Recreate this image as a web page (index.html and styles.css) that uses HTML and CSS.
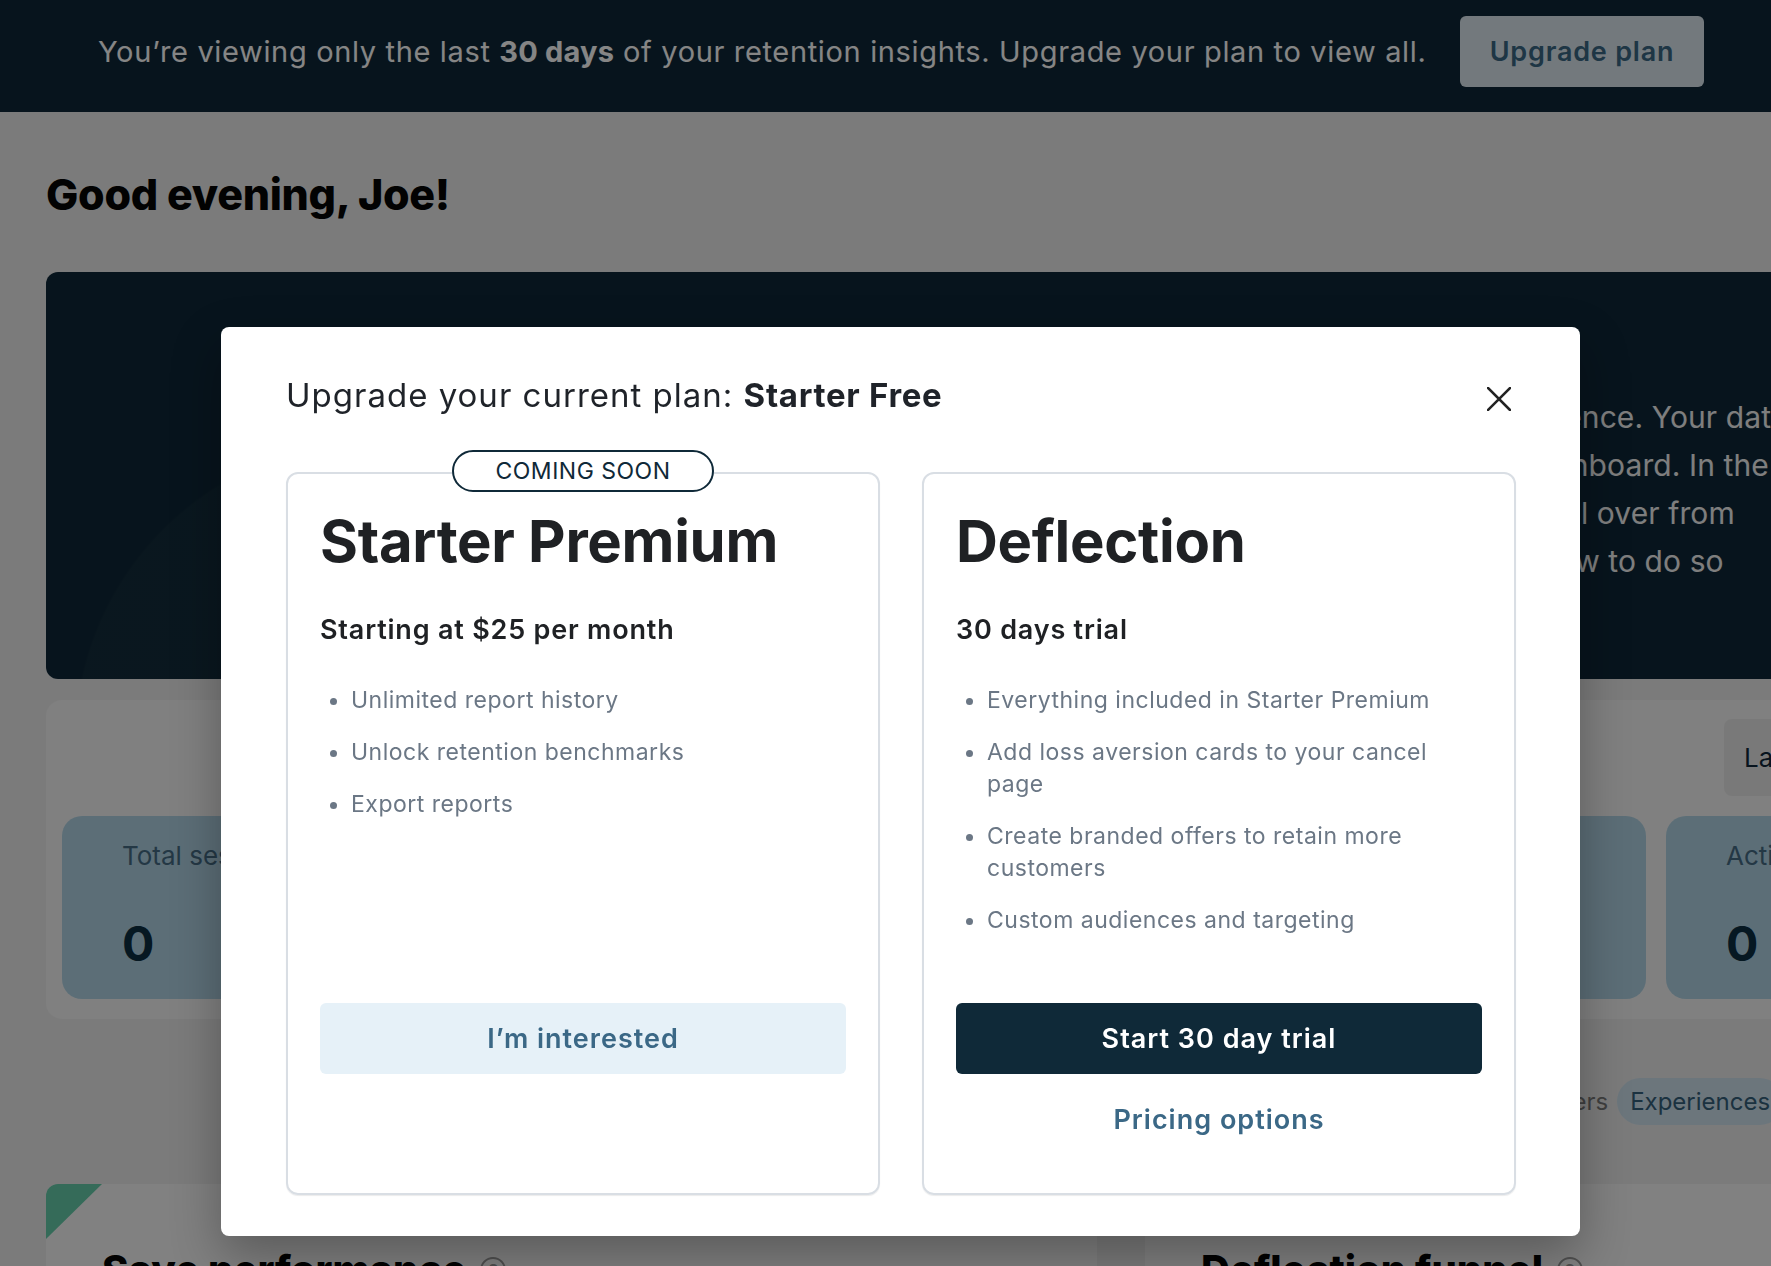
FILE: index.html
```html
<!DOCTYPE html>
<html lang="en">
<head>
<meta charset="utf-8">
<title>Retention insights</title>
<link rel="stylesheet" href="styles.css">
</head>
<body>
<header class="banner">
  <p class="banner-text">You’re viewing only the last <strong>30 days</strong> of your retention insights. Upgrade your plan to view all.</p>
  <button class="banner-btn">Upgrade plan</button>
</header>

<main class="main">
  <h1 class="greeting">Good evening, Joe!</h1>

  <section class="hero">
    <div class="hero-art"></div>
    <p class="hero-text">Welcome to your new churn insights experience. Your data<br>is now being migrated over to your new dashboard. In the<br>coming weeks, we’ll bring your old history all over from<br>your previous account. Here’s a guide on how to do so</p>
  </section>

  <section class="stats-panel">
    <div class="stats-head">
      <button class="range">Last 30 days
        <svg class="chev" viewBox="0 0 20 20" width="20" height="20"><path d="M5 8l5 5 5-5" fill="none" stroke="#10283a" stroke-width="2"/></svg>
      </button>
    </div>
    <div class="stats-grid">
      <div class="stat"><span class="stat-label">Total sessions</span><span class="stat-value">0</span></div>
      <div class="stat"><span class="stat-label">Saved sessions</span><span class="stat-value">0</span></div>
      <div class="stat"><span class="stat-label">Save rate</span><span class="stat-value">0</span></div>
      <div class="stat"><span class="stat-label">Revenue saved</span><span class="stat-value">0</span></div>
      <div class="stat"><span class="stat-label">Active subscribers</span><span class="stat-value">0</span></div>
    </div>
  </section>

  <nav class="tabs">
    <span class="tab">Customers</span>
    <span class="tab tab-active">Experiences</span>
    <span class="tab">Offers</span>
    <span class="tab">Surveys</span>
  </nav>

  <div class="panels">
    <section class="panel">
      <span class="ribbon"></span>
      <h2 class="panel-title">Save performance <span class="info">?</span></h2>
    </section>
    <section class="panel">
      <h2 class="panel-title">Deflection funnel <span class="info">?</span></h2>
    </section>
  </div>
</main>

<div class="overlay"></div>

<div class="modal" role="dialog" aria-label="Upgrade your current plan">
  <div class="modal-head">
    <h2 class="modal-title">Upgrade your current plan: <strong>Starter Free</strong></h2>
    <button class="close" aria-label="Close">
      <svg viewBox="0 0 24 24" width="24" height="24"><path d="M1 1L23 23M23 1L1 23" stroke="#222" stroke-width="2.5" stroke-linecap="square"/></svg>
    </button>
  </div>

  <div class="plans">
    <article class="plan">
      <span class="badge">COMING SOON</span>
      <h3 class="plan-name">Starter Premium</h3>
      <p class="plan-price">Starting at $25 per month</p>
      <ul class="features">
        <li>Unlimited report history</li>
        <li>Unlock retention benchmarks</li>
        <li>Export reports</li>
      </ul>
      <div class="plan-actions">
        <button class="btn btn-soft">I’m interested</button>
      </div>
    </article>

    <article class="plan">
      <h3 class="plan-name">Deflection</h3>
      <p class="plan-price">30 days trial</p>
      <ul class="features">
        <li>Everything included in Starter Premium</li>
        <li>Add loss aversion cards to your cancel page</li>
        <li>Create branded offers to retain more customers</li>
        <li>Custom audiences and targeting</li>
      </ul>
      <div class="plan-actions">
        <button class="btn btn-dark">Start 30 day trial</button>
        <button class="btn btn-link">Pricing options</button>
      </div>
    </article>
  </div>
</div>
</body>
</html>
```

FILE: styles.css
```css
* { box-sizing: border-box; }

html, body {
  margin: 0;
  padding: 0;
}

body {
  background: #ececec;
  font-family: Inter, "Noto Sans", "Liberation Sans", sans-serif;
  color: #1f2329;
  overflow: hidden;
  height: 1266px;
}

button {
  font-family: inherit;
  border: 0;
  cursor: pointer;
}

/* ---------- top banner ---------- */
.banner {
  display: flex;
  align-items: center;
  justify-content: space-between;
  height: 112px;
  padding: 16px 67px 25px 98px;
  background: #0f2838;
}

.banner-text {
  margin: 0;
  font-size: 29px;
  line-height: 36px;
  letter-spacing: 0.65px;
  color: #ffffff;
  white-space: nowrap;
}

.banner-text strong { font-weight: 700; letter-spacing: 0.2px; }

.banner-btn {
  width: 244px;
  height: 71px;
  border-radius: 6px;
  background: #dde9f0;
  color: #3a6885;
  font-size: 27px;
  font-weight: 600;
  letter-spacing: 0.8px;
}

/* ---------- main ---------- */
.main {
  width: 2063px;
  padding-left: 46px;
}

.greeting {
  margin: 58px 0 54px;
  font-size: 43px;
  line-height: 48px;
  font-weight: 800;
  color: #050505;
  letter-spacing: -0.3px;
}

.hero {
  display: grid;
  grid-template-columns: 902px 1fr;
  height: 407px;
  border-radius: 12px;
  background:
    radial-gradient(circle at 330px 470px, rgba(255,255,255,0.018) 0 300px, transparent 302px),
    #0f2838;
  overflow: hidden;
}

.hero-text {
  margin: 0;
  padding-top: 121px;
  font-size: 30px;
  line-height: 48px;
  letter-spacing: 0.1px;
  color: #f2f2f2;
  white-space: nowrap;
}

/* ---------- stats ---------- */
.stats-panel {
  margin-top: 21px;
  padding: 19px 16px 20px;
  border-radius: 16px;
  background: #f5f5f5;
}

.stats-head {
  display: flex;
  justify-content: flex-end;
  margin-bottom: 20px;
}

.range {
  display: flex;
  align-items: center;
  justify-content: space-between;
  width: 323px;
  height: 77px;
  padding: 0 20px;
  border-radius: 8px;
  background: #e9e9e9;
  color: #10283a;
  font-size: 26px;
}

.stats-grid {
  display: grid;
  grid-template-columns: repeat(5, 1fr);
  gap: 20px;
}

.stat {
  display: flex;
  flex-direction: column;
  height: 183px;
  padding: 22px 60px 26px;
  border-radius: 20px;
  background: #b1d4e5;
}

.stat-label {
  font-size: 26px;
  line-height: 36px;
  color: #466c85;
  white-space: nowrap;
}

.stat-value {
  margin-top: 41px;
  font-size: 48px;
  line-height: 58px;
  font-weight: 700;
  color: #0d2e41;
}

/* ---------- tabs ---------- */
.tabs {
  display: flex;
  justify-content: flex-end;
  align-items: center;
  margin-top: 59px;
  height: 47px;
  padding-right: 82px;
}

.tab {
  padding: 0 9px;
  font-size: 24px;
  line-height: 47px;
  color: #7a7a7a;
  white-space: nowrap;
}

.tab-active {
  padding: 0 13px;
  border-radius: 24px;
  background: #cfe3ee;
  color: #35607b;
}

/* ---------- panels ---------- */
.panels {
  display: grid;
  grid-template-columns: 1051px 1fr;
  gap: 48px;
  margin-top: 59px;
}

.panel {
  position: relative;
  height: 400px;
  padding: 62px 56px;
  border-radius: 12px;
  background: #f8f8f8;
  overflow: hidden;
}

.ribbon {
  position: absolute;
  left: 0;
  top: 0;
  width: 56px;
  height: 55px;
  background: #66cdab;
  clip-path: polygon(0 0, 100% 0, 0 100%);
}

.panel-title {
  margin: 0;
  display: flex;
  align-items: center;
  gap: 14px;
  font-size: 40px;
  line-height: 48px;
  font-weight: 800;
  color: #050505;
}

.info {
  display: inline-flex;
  align-items: center;
  justify-content: center;
  width: 26px;
  height: 26px;
  border: 2px solid #9a9a9a;
  border-radius: 50%;
  font-size: 16px;
  color: #9a9a9a;
}

/* ---------- overlay + modal ---------- */
.overlay {
  position: fixed;
  inset: 0;
  background: rgba(0, 0, 0, 0.48);
  z-index: 10;
}

.modal {
  position: absolute;
  left: 221px;
  top: 327px;
  width: 1359px;
  padding: 48px 64px 41px 65px;
  border-radius: 8px;
  background: #ffffff;
  box-shadow: 0 20px 50px rgba(0, 0, 0, 0.3);
  z-index: 11;
}

.modal-head {
  display: flex;
  align-items: center;
  justify-content: space-between;
  height: 40px;
}

.modal-title {
  margin: 0;
  font-size: 33px;
  line-height: 40px;
  font-weight: 400;
  letter-spacing: 1px;
  color: #1f2329;
}

.modal-title strong { font-weight: 700; letter-spacing: 0.7px; }

.close {
  display: flex;
  align-items: center;
  justify-content: center;
  width: 40px;
  height: 40px;
  margin: 8px -3px 0 0;
  background: transparent;
  padding: 0;
}

.plans {
  display: grid;
  grid-template-columns: 1fr 1fr;
  gap: 42px;
  margin-top: 57px;
}

.plan {
  position: relative;
  display: flex;
  flex-direction: column;
  padding: 34px 32px 38px;
  border: 2px solid #d9dee4;
  border-radius: 12px;
  box-shadow: 0 1px 1px rgba(0, 0, 0, 0.08);
}

.badge {
  position: absolute;
  top: -24px;
  left: 50%;
  transform: translateX(-50%);
  width: 262px;
  height: 42px;
  border: 2px solid #0f2938;
  border-radius: 21px;
  background: #ffffff;
  font-size: 23px;
  line-height: 38px;
  letter-spacing: 0.5px;
  text-align: center;
  color: #0f2938;
}

.plan-name {
  margin: 0;
  font-size: 58px;
  line-height: 67px;
  font-weight: 700;
  color: #1f2124;
  letter-spacing: -0.3px;
}

.plan-price {
  margin: 37px 0 0;
  font-size: 27px;
  line-height: 36px;
  font-weight: 600;
  letter-spacing: 0.8px;
  color: #1f2124;
}

.features {
  flex: 1;
  margin: 36px 0 67px;
  padding: 0 30px 0 31px;
  color: #6b7785;
  font-size: 23px;
  line-height: 32px;
  letter-spacing: 0.5px;
}

.features li + li { margin-top: 20px; }

.plan-actions {
  display: flex;
  flex-direction: column;
  gap: 10px;
  height: 152px;
}

.btn {
  width: 100%;
  height: 71px;
  border-radius: 6px;
  font-size: 27px;
  font-weight: 600;
  letter-spacing: 1px;
}

.btn-soft {
  background: #e6f1f8;
  color: #3b6886;
}

.btn-dark {
  background: #0f2938;
  color: #ffffff;
}

.btn-link {
  background: transparent;
  color: #3b6886;
}
```
